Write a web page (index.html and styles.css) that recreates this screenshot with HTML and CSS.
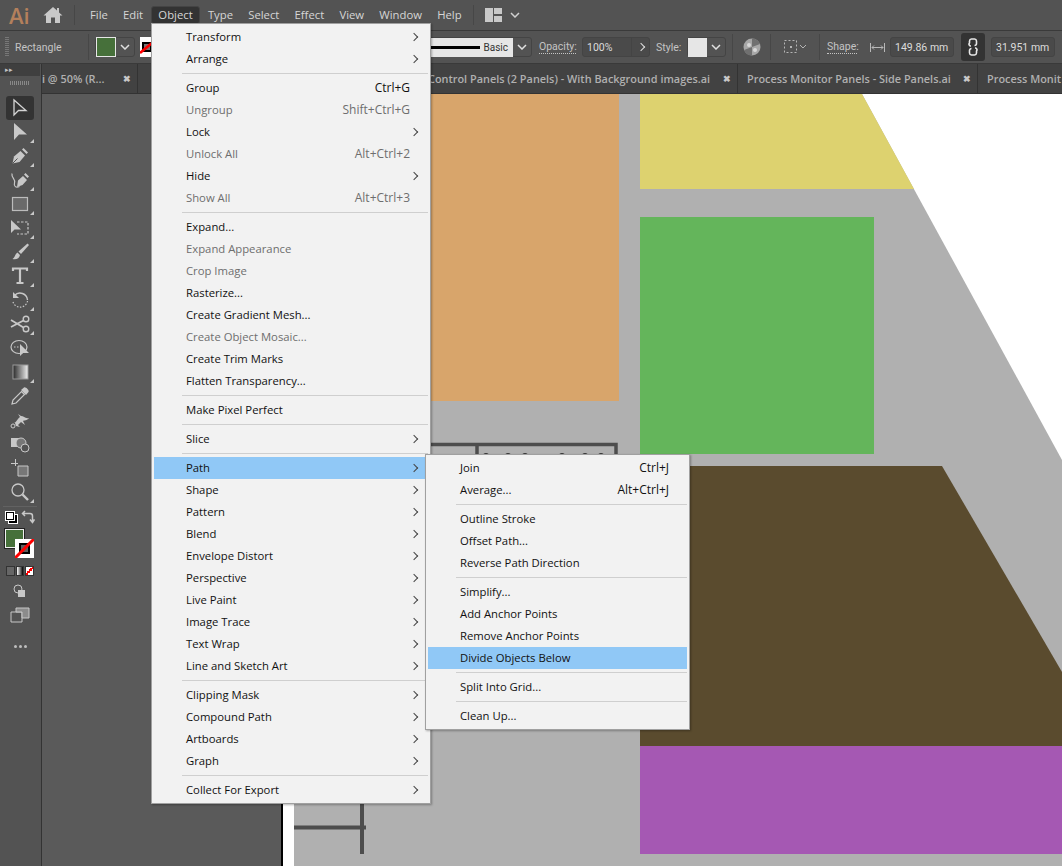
FILE: index.html
```html
<!DOCTYPE html>
<html lang="en">
<head>
  <meta charset="UTF-8">
  <title>Illustrator - Object menu</title>
  <link rel="stylesheet" href="styles.css">
</head>
<body>
<div class="app">

  <div class="menubar">
    <span class="logo">Ai</span>
    <svg class="home" width="20" height="18" viewBox="0 0 20 18"><path d="M10 1 0.5 9.5H3V17H8V11.5H12V17H17V9.5H19.5L16 6.4V2H14V4.6Z" fill="#c9c9c9"/></svg>
    <span class="vsep"></span>
    <nav class="menus">
      <span>File</span><span>Edit</span><span class="active">Object</span><span>Type</span><span>Select</span><span>Effect</span><span>View</span><span>Window</span><span>Help</span>
    </nav>
    <span class="vsep"></span>
    <svg class="layout-icon" width="18" height="14" viewBox="0 0 18 14"><path d="M0 0H8V14H0ZM9 0H17V6H9ZM9 8H17V14H9Z" fill="#c9c9c9"/></svg>
    <svg class="small-chev" width="10" height="6" viewBox="0 0 10 6"><path d="M1 1 5 5 9 1" fill="none" stroke="#d0d0d0" stroke-width="1.5"/></svg>
  </div>

  <div class="controlbar">
    <div class="ctl-left">
      <span class="grip"></span>
      <span class="ctl-label first">Rectangle</span>
      <span class="vsep short"></span>
      <span class="combo">
        <span class="swatch green"></span>
        <svg class="small-chev" width="10" height="6" viewBox="0 0 10 6"><path d="M1 1 5 5 9 1" fill="none" stroke="#e0e0e0" stroke-width="1.5"/></svg>
      </span>
      <svg class="nofill" width="14" height="20" viewBox="0 0 14 20"><rect width="14" height="20" fill="#fff"/><rect x="3" y="6" width="8" height="8" fill="#777" stroke="#000" stroke-width="2"/><path d="M0 16 12 6" stroke="#f00" stroke-width="2.500"/></svg>
    </div>
    <div class="ctl-right">
      <span class="combo">
        <span class="brush"><span class="brush-line"></span>Basic</span>
        <svg class="small-chev" width="10" height="6" viewBox="0 0 10 6"><path d="M1 1 5 5 9 1" fill="none" stroke="#e0e0e0" stroke-width="1.5"/></svg>
      </span>
      <span class="ctl-label dotted opacity-label">Opacity:</span>
      <span class="field opacity"><span class="field-text">100%</span><span class="field-arrow"><i class="chev"></i></span></span>
      <span class="ctl-label style-label">Style:</span>
      <span class="combo">
        <span class="swatch style"></span>
        <svg class="small-chev" width="10" height="6" viewBox="0 0 10 6"><path d="M1 1 5 5 9 1" fill="none" stroke="#e0e0e0" stroke-width="1.5"/></svg>
      </span>
      <span class="vsep short"></span>
      <svg class="globe" width="18" height="18" viewBox="0 0 18 18"><circle cx="9" cy="9" r="8.5" fill="#a8a8a8"/><path d="M9 9 9 .5A8.5 8.5 0 0 1 17 6ZM9 9 1 12A8.5 8.5 0 0 0 9 17.500Z" fill="#707070"/><circle cx="6" cy="7" r="2" fill="#d8d8d8"/><circle cx="12" cy="12" r="2" fill="#d8d8d8"/></svg>
      <span class="vsep short"></span>
      <svg class="align" width="24" height="16" viewBox="0 0 24 16"><path d="M1.500 1.500H13.500V13.500H1.500Z" fill="none" stroke="#b5b5b5" stroke-dasharray="2 2"/><path d="M7 7h2v2H7z" fill="#b5b5b5"/><path d="M17 6l3 3 3-3" fill="none" stroke="#b5b5b5"/></svg>
      <span class="vsep short"></span>
      <span class="ctl-label dotted shape-label">Shape:</span>
      <svg class="width-icon" width="15" height="9" viewBox="0 0 15 9"><path d="M.5 0V9M14.500 0V9M2 4.500H13M4 2.500 2 4.500 4 6.500M11 2.500 13 4.500 11 6.500" fill="none" stroke="#b8b8b8"/></svg>
      <span class="field size">149.86 mm</span>
      <span class="link-btn"><svg width="10" height="18" viewBox="0 0 10 18"><path d="M3 8H2.500A1.800 1.800 0 0 1 1.500 5V3A2.200 2.200 0 0 1 3.500 1H6.500A2.200 2.200 0 0 1 8.500 3V5.500A2 2 0 0 1 6.500 7.500M7 10H7.500A1.800 1.800 0 0 1 8.500 13V15A2.200 2.200 0 0 1 6.500 17H3.500A2.200 2.200 0 0 1 1.500 15V12.500A2 2 0 0 1 3.500 10.500" fill="none" stroke="#e8e8e8" stroke-width="1.600"/></svg></span>
      <span class="field size">31.951 mm</span>
    </div>
  </div>

  <div class="workspace">
    <aside class="toolbar">
      <div class="tool-head"><span class="arrows">&#9656;&#9656;</span></div>
      <div class="tool-grip"></div>

      <div class="tool selected"><svg width="20" height="20" viewBox="0 0 20 20"><path d="M4 2V17L8.500 12.500H16Z" fill="none" stroke="#d4d4d4" stroke-width="1.300"/></svg></div>
      <div class="tool more"><svg width="20" height="20" viewBox="0 0 20 20"><path d="M4 1V18L9 12.500H17Z" fill="#c8c8c8"/></svg></div>
      <div class="tool more"><svg width="20" height="20" viewBox="0 0 20 20"><path d="M2.500 17.500 4 10.500 10.500 5 15 9.500 9.500 16Z" fill="#c8c8c8"/><path d="M12 3.500 13.500 2 18 6.500 16.500 8Z" fill="#c8c8c8"/><path d="M2.500 17.500 7.500 12.500" stroke="#535353"/></svg></div>
      <div class="tool more"><svg width="20" height="20" viewBox="0 0 20 20"><path d="M7 17 8 10.500 13 6 17 10 12.500 15ZM14 4.500 15.500 3 19 6.500 17.500 8Z" fill="#c8c8c8"/><path d="M2 3.500C1 8 6 9 4.500 13 3.500 16.500 6 18 9.500 16.500" fill="none" stroke="#c8c8c8" stroke-width="1.200"/></svg></div>
      <div class="tool more"><svg width="20" height="20" viewBox="0 0 20 20"><rect x="2.500" y="3.500" width="15" height="13" fill="#6a6a6a" stroke="#bcbcbc" stroke-width="1.200"/></svg></div>
      <div class="tool more"><svg width="20" height="20" viewBox="0 0 20 20"><path d="M7 4H18V16H7" fill="none" stroke="#c8c8c8" stroke-dasharray="2.500 1.500" stroke-width="1.200"/><path d="M1 2V15L4.500 11.500H11Z" fill="#c8c8c8"/></svg></div>
      <div class="tool more"><svg width="20" height="20" viewBox="0 0 20 20"><path d="M17.500 1.500 19 3 11 12 8.500 9.500Z" fill="#c8c8c8"/><path d="M7.500 10.500 10 13C9.500 16.500 6 18 2.500 17 5 15.500 5 12 7.500 10.500Z" fill="#c8c8c8"/></svg></div>
      <div class="tool more"><svg width="20" height="20" viewBox="0 0 20 20"><path d="M3 5V2.500H17V5M10 2.500V17M6.500 17H13.500" fill="none" stroke="#c8c8c8" stroke-width="2.200"/></svg></div>
      <div class="tool more"><svg width="20" height="20" viewBox="0 0 20 20"><path d="M4.500 5.500A7.500 7.500 0 0 1 17.500 10" fill="none" stroke="#c8c8c8" stroke-width="1.400"/><path d="M17.500 11A7.500 7.500 0 0 1 3 12" fill="none" stroke="#c8c8c8" stroke-width="1.200" stroke-dasharray="1.500 1.500"/><path d="M3 2V8H9" fill="#c8c8c8"/></svg></div>
      <div class="tool more"><svg width="20" height="20" viewBox="0 0 20 20"><circle cx="16" cy="5" r="2.800" fill="none" stroke="#c8c8c8" stroke-width="1.400"/><circle cx="16" cy="15" r="2.800" fill="none" stroke="#c8c8c8" stroke-width="1.400"/><path d="M13.500 6.500 1 13M13.500 13.500 1 6" stroke="#c8c8c8" stroke-width="1.800" fill="none"/></svg></div>
      <div class="tool"><svg width="20" height="20" viewBox="0 0 20 20"><ellipse cx="9" cy="9" rx="8" ry="6.500" fill="none" stroke="#c8c8c8" stroke-width="1.200"/><path d="M4 9h1.500M7 9h1.500" stroke="#c8c8c8"/><path d="M10 6V18L13 15H19Z" fill="#c8c8c8"/></svg></div>
      <div class="tool more grad-tool"><svg width="20" height="20" viewBox="0 0 20 20"><defs><linearGradient id="gr"><stop offset="0" stop-color="#2a2a2a"/><stop offset="1" stop-color="#f0f0f0"/></linearGradient></defs><rect x="3" y="3" width="15" height="14" fill="url(#gr)" stroke="#999"/></svg></div>
      <div class="tool"><svg width="20" height="20" viewBox="0 0 20 20"><path d="M2 18 3 14 11.500 5.500 14.500 8.500 6 17Z" fill="none" stroke="#c8c8c8" stroke-width="1.200"/><path d="M11 4 14 1.500C15.500.5 19.500 4.500 18.500 6L16 9Z" fill="#c8c8c8"/></svg></div>
      <div class="tool"><svg width="20" height="20" viewBox="0 0 20 20"><path d="M2 13C6 14 7 9 10 7L8 4 11 6C14 6 15 9 19 8 17 11 14 10 13 11L15 15 11 12 8 15 10 17 6 16 5 13Z" fill="#c8c8c8"/><circle cx="3" cy="16" r="2" fill="none" stroke="#c8c8c8"/></svg></div>
      <div class="tool"><svg width="20" height="20" viewBox="0 0 20 20"><rect x="1" y="4" width="9" height="9" fill="#c8c8c8"/><circle cx="11" cy="9" r="5" fill="#777" stroke="#c8c8c8"/><circle cx="15" cy="14" r="4" fill="#535353" stroke="#c8c8c8"/></svg></div>
      <div class="tool"><svg width="20" height="20" viewBox="0 0 20 20"><path d="M8 8H18V18H8Z" fill="#777" stroke="#c8c8c8"/><path d="M1 5.500H8M5.500 1V8" stroke="#c8c8c8"/></svg></div>
      <div class="tool more"><svg width="20" height="20" viewBox="0 0 20 20"><circle cx="8" cy="8" r="6" fill="none" stroke="#c8c8c8" stroke-width="1.300"/><path d="M12.500 12.500 18 18" stroke="#c8c8c8" stroke-width="2.400"/></svg></div>

      <div class="tool-sep"></div>

      <div class="color-mini">
        <span class="mini-swatches"><i class="mini-fill"></i><i class="mini-stroke"></i></span>
        <svg width="14" height="14" viewBox="0 0 14 14"><path d="M2 3.500H9C11 3.500 11.500 5 11.500 6V12M9 9.500 11.500 12.500 13.500 9.500M4 1 1.500 3.500 4 6" fill="none" stroke="#c8c8c8" stroke-width="1.500"/></svg>
      </div>
      <div class="fillstroke">
        <span class="big-fill"></span>
        <svg class="big-stroke" width="19" height="19" viewBox="0 0 19 19"><rect width="19" height="19" fill="#fff"/><rect x="5" y="5" width="9" height="9" fill="#5f5f5f" stroke="#000" stroke-width="2"/><path d="M0 19 19 0" stroke="#f00" stroke-width="3"/></svg>
      </div>
      <div class="modes">
        <i class="mode solid"></i><i class="mode gradient"></i><i class="mode none"></i>
      </div>
      <div class="tool small"><svg width="16" height="14" viewBox="0 0 16 14"><circle cx="6" cy="5" r="4" fill="none" stroke="#c8c8c8"/><rect x="6" y="6" width="7" height="7" fill="#c8c8c8"/></svg></div>
      <div class="tool"><svg width="20" height="18" viewBox="0 0 20 18"><path d="M1 6H12V16H1Z" fill="none" stroke="#c8c8c8"/><path d="M6 2H19V12H12V6H6Z" fill="#8c8c8c" stroke="#c8c8c8"/></svg></div>
      <div class="dots"><i></i><i></i><i></i></div>
    </aside>

    <div class="docarea">
      <div class="tabs">
        <div class="tab first"><span class="tab-name">i @ 50% (R...</span><span class="close">&#10006;</span></div>
        <div class="tab second"><span class="tab-name">Control Panels (2 Panels) - With Background  images.ai</span><span class="close">&#10006;</span></div>
        <div class="tab third"><span class="tab-name">Process Monitor Panels - Side Panels.ai</span><span class="close">&#10006;</span></div>
        <div class="tab last"><span class="tab-name">Process Monit</span></div>
      </div>
      <div class="canvas">
        <svg class="art" width="1020" height="772" viewBox="42 94 1020 772">
          <rect x="42" y="94" width="239" height="772" fill="#5a5a5a"/>
          <rect x="281" y="94" width="2" height="772" fill="#000"/>
          <rect x="283" y="94" width="11" height="772" fill="#fff"/>
          <rect x="294" y="94" width="768" height="772" fill="#b0b0b0"/>
          <path d="M862 94H1062V460Z" fill="#fff"/>
          <rect x="400" y="94" width="219" height="307" fill="#d8a56b"/>
          <path d="M640 94H862L914 189H640Z" fill="#ddd26f"/>
          <rect x="640" y="217" width="234" height="237" fill="#64b55b"/>
          <path d="M640 466H942L1062 672V746H640Z" fill="#5a4b2e"/>
          <rect x="640" y="746" width="422" height="108" fill="#a558b3"/>
          <path d="M425 444.500H616V456M477 444.500V456" fill="none" stroke="#4d4d4d" stroke-width="3.500"/>
          <path d="M294 827.500H366M362 804V854" fill="none" stroke="#4d4d4d" stroke-width="4"/>
          <circle cx="486" cy="456" r="3" fill="#333"/><circle cx="508" cy="456" r="3" fill="#333"/><circle cx="525" cy="456" r="3" fill="#333"/><circle cx="562" cy="456" r="3" fill="#333"/><circle cx="585" cy="456" r="3" fill="#333"/><circle cx="601" cy="456" r="3" fill="#333"/>
        </svg>
      </div>
    </div>
  </div>

  <div class="menu object-menu">
    <div class="item sub">Transform</div>
    <div class="item sub">Arrange</div>
    <div class="sep"></div>
    <div class="item">Group<kbd>Ctrl+G</kbd></div>
    <div class="item off">Ungroup<kbd>Shift+Ctrl+G</kbd></div>
    <div class="item sub">Lock</div>
    <div class="item off">Unlock All<kbd>Alt+Ctrl+2</kbd></div>
    <div class="item sub">Hide</div>
    <div class="item off">Show All<kbd>Alt+Ctrl+3</kbd></div>
    <div class="sep"></div>
    <div class="item">Expand...</div>
    <div class="item off">Expand Appearance</div>
    <div class="item off">Crop Image</div>
    <div class="item">Rasterize...</div>
    <div class="item">Create Gradient Mesh...</div>
    <div class="item off">Create Object Mosaic...</div>
    <div class="item">Create Trim Marks</div>
    <div class="item">Flatten Transparency...</div>
    <div class="sep"></div>
    <div class="item">Make Pixel Perfect</div>
    <div class="sep"></div>
    <div class="item sub">Slice</div>
    <div class="sep"></div>
    <div class="item sub hl">Path</div>
    <div class="item sub">Shape</div>
    <div class="item sub">Pattern</div>
    <div class="item sub">Blend</div>
    <div class="item sub">Envelope Distort</div>
    <div class="item sub">Perspective</div>
    <div class="item sub">Live Paint</div>
    <div class="item sub">Image Trace</div>
    <div class="item sub">Text Wrap</div>
    <div class="item sub">Line and Sketch Art</div>
    <div class="sep"></div>
    <div class="item sub">Clipping Mask</div>
    <div class="item sub">Compound Path</div>
    <div class="item sub">Artboards</div>
    <div class="item sub">Graph</div>
    <div class="sep"></div>
    <div class="item sub">Collect For Export</div>
  </div>

  <div class="menu path-menu">
    <div class="item">Join<kbd>Ctrl+J</kbd></div>
    <div class="item">Average...<kbd>Alt+Ctrl+J</kbd></div>
    <div class="sep"></div>
    <div class="item">Outline Stroke</div>
    <div class="item">Offset Path...</div>
    <div class="item">Reverse Path Direction</div>
    <div class="sep"></div>
    <div class="item">Simplify...</div>
    <div class="item">Add Anchor Points</div>
    <div class="item">Remove Anchor Points</div>
    <div class="item hl">Divide Objects Below</div>
    <div class="sep"></div>
    <div class="item">Split Into Grid...</div>
    <div class="sep"></div>
    <div class="item">Clean Up...</div>
  </div>

</div>
</body>
</html>
```

FILE: styles.css
```css
* {
  box-sizing: border-box;
}

html, body {
  margin: 0;
  height: 100%;
  overflow: hidden;
}

body {
  font-family: "Open Sans", "Noto Sans", sans-serif;
  font-size: 11.3px;
  background-color: #535353;
}

.app {
  position: relative;
  width: 1062px;
  height: 866px;
  display: flex;
  flex-direction: column;
  overflow: hidden;
}

/* top menu bar */
.menubar {
  height: 31px;
  display: flex;
  align-items: center;
  background-color: #535353;
  border-bottom: 1px solid #3a3a3a;
  padding-left: 9px;
  color: #d6d6d6;
}

.logo {
  width: 20px;
  font-size: 22px;
  font-weight: 600;
  color: #b4805c;
  margin-right: 14px;
}

.home {
  margin-right: 11px;
}

.vsep {
  width: 1px;
  height: 20px;
  flex: none;
  background-color: #474747;
}

.vsep.short {
  height: 26px;
}

.menus {
  display: flex;
  align-items: center;
  margin-left: 8px;
  margin-right: 3px;
}

.menus span {
  padding: 1px 7px 2px;
  margin-right: 1.200px;
  border-radius: 3px;
}

.menus .active {
  background-color: #333;
  border: 1px solid #444;
  padding: 0 6px 1px;
}

.layout-icon {
  margin-left: 11px;
  margin-right: 7px;
}

/* control bar */
.controlbar {
  height: 33px;
  display: flex;
  justify-content: space-between;
  align-items: center;
  background-color: #535353;
  border-bottom: 1px solid #3a3a3a;
  padding-right: 7px;
  color: #c4c4c4;
  font-family: Roboto, sans-serif;
  font-size: 10.5px;
}

.ctl-left, .ctl-right {
  display: flex;
  align-items: center;
}

.grip {
  width: 4px;
  height: 20px;
  margin-left: 5px;
  background-image: repeating-linear-gradient(#777 0 1px, transparent 1px 2px);
}

.ctl-label {
  flex: none;
  white-space: nowrap;
}

.ctl-label.first {
  width: 44px;
  margin-left: 6px;
  margin-right: 29px;
}

.ctl-left .vsep {
  margin-right: 6px;
}

.combo {
  height: 20px;
  display: flex;
  align-items: center;
  border: 1px solid #444;
  border-radius: 3px;
}

.combo .small-chev {
  margin: 0 4px;
}

.swatch {
  display: block;
  height: 19px;
}

.swatch.green {
  width: 20px;
  height: 20px;
  background-color: #46703a;
  border: 1px solid #e6e6e6;
}

.nofill {
  margin-left: 5px;
}

.swatch.style {
  width: 19px;
  background-color: #e6e6e6;
}

.brush {
  width: 83px;
  height: 19px;
  display: flex;
  align-items: center;
  justify-content: flex-end;
  padding-right: 5px;
  background-color: #e6e6e6;
  color: #333;
  font-size: 10px;
}

.brush-line {
  width: 50px;
  height: 3px;
  background-color: #000;
  margin-right: 4px;
}

.ctl-right > .ctl-label {
  margin-left: 7px;
  margin-right: 6px;
}

.opacity-label {
  width: 37px;
}

.ctl-right > .style-label {
  width: 25px;
  margin-left: 6px;
}

.ctl-right > .shape-label {
  width: 30px;
  margin-right: 13px;
}

.ctl-label.dotted {
  border-bottom: 1px dotted #c4c4c4;
  line-height: 12px;
}

.field {
  height: 20px;
  display: flex;
  align-items: center;
  border: 1px solid #444;
  border-radius: 3px;
  background-color: #4a4a4a;
  color: #dcdcdc;
  font-size: 10.5px;
}

.field.opacity {
  width: 68px;
}

.field-text {
  flex: 1;
  padding-left: 4px;
}

.field-arrow {
  width: 18px;
  height: 18px;
  display: flex;
  align-items: center;
  justify-content: center;
  border-left: 1px solid #444;
}

.chev {
  display: block;
  width: 6px;
  height: 6px;
  border-top: 1.500px solid #e0e0e0;
  border-right: 1.500px solid #e0e0e0;
  transform: rotate(45deg);
}

.ctl-right > .vsep {
  margin-left: 6px;
}

.globe {
  margin: 0 3px 0 10px;
}

.ctl-right > .vsep + .align {
  margin: 0 6px 0 12px;
}

.width-icon {
  margin: 0 5px 0 0;
}

.field.size {
  width: 64px;
  padding-left: 4px;
}

.link-btn {
  width: 24px;
  height: 28px;
  margin: 0 6px 0 7px;
  display: flex;
  align-items: center;
  justify-content: center;
  background-color: #333;
  border-radius: 3px;
}

/* tools + document */
.workspace {
  flex: 1;
  display: flex;
  min-height: 0;
}

.toolbar {
  width: 42px;
  flex: none;
  display: flex;
  flex-direction: column;
  align-items: center;
  padding-right: 1px;
  background-color: #535353;
  border-right: 1px solid #333;
}

.tool-head {
  width: 100%;
  height: 12px;
  background-color: #3f3f3f;
  font-size: 7px;
  line-height: 12px;
  color: #c4c4c4;
  padding-left: 5px;
}

.tool-grip {
  width: 20px;
  height: 4px;
  margin: 5px 0 11px;
  background-image: repeating-linear-gradient(90deg, #888 0 1px, transparent 1px 2px);
}

.tool {
  position: relative;
  width: 28px;
  height: 24px;
  display: flex;
  align-items: center;
  justify-content: center;
  border-radius: 3px;
}

.tool.selected {
  background-color: #333;
}

.tool.more::after {
  content: "";
  position: absolute;
  right: 0;
  bottom: 1px;
  border-style: solid;
  border-width: 0 0 4px 4px;
  border-color: transparent transparent #c8c8c8 transparent;
}

.tool.small {
  height: 20px;
  margin-bottom: 2px;
}

.tool-sep {
  width: 34px;
  height: 1px;
  margin: 2px 0 3px;
  background-color: #626262;
}

.color-mini {
  width: 30px;
  display: flex;
  justify-content: space-between;
  align-items: center;
  margin-bottom: 5px;
}

.mini-swatches {
  position: relative;
  width: 12px;
  height: 12px;
}

.mini-fill, .mini-stroke {
  position: absolute;
  width: 8px;
  height: 8px;
  border: 1px solid #000;
  outline: 1px solid #fff;
  background-color: #fff;
}

.mini-fill {
  left: 1px;
  top: 1px;
  z-index: 1;
}

.mini-stroke {
  right: 0;
  bottom: 0;
  background-color: #000;
}

.fillstroke {
  position: relative;
  width: 30px;
  height: 30px;
  margin-bottom: 7px;
}

.big-fill {
  position: absolute;
  left: 0;
  top: 0;
  width: 19px;
  height: 19px;
  background-color: #46703a;
  border: 1px solid #f0f0f0;
  outline: 1px solid #222;
}

.big-stroke {
  position: absolute;
  left: 10px;
  top: 10px;
}

.modes {
  display: flex;
  width: 28px;
  height: 10px;
  gap: 1px;
  margin-bottom: 5px;
}

.mode {
  flex: 1;
  border: 1px solid #333;
}

.mode.solid {
  background-color: #666;
}

.mode.gradient {
  background-image: linear-gradient(90deg, #fff, #000);
}

.mode.none {
  background-color: #fff;
  background-image: linear-gradient(135deg, transparent 40%, #f00 40% 60%, transparent 60%);
}

.dots {
  display: flex;
  gap: 2px;
  margin-top: 18px;
}

.dots i {
  width: 3px;
  height: 3px;
  border-radius: 50%;
  background-color: #bdbdbd;
}

.docarea {
  flex: 1;
  min-width: 0;
  display: flex;
  flex-direction: column;
}

.tabs {
  height: 30px;
  flex: none;
  display: flex;
  background-color: #424242;
  border-bottom: 1px solid #333;
  color: #b0b0b0;
  font-size: 10.9px;
  font-weight: 600;
  overflow: hidden;
  white-space: nowrap;
}

.tab {
  flex: none;
  display: flex;
  align-items: center;
  justify-content: space-between;
  padding-right: 6px;
  border-right: 1px solid #333;
}

.tab.first {
  width: 96px;
}

.tab.second {
  width: 600px;
  padding-left: 290px;
}

.tab.third {
  width: 240px;
  padding-left: 9px;
}

.tab.last {
  border-right: 0;
  padding-left: 9px;
}

.close {
  font-size: 9px;
  color: #c8c8c8;
}

.canvas {
  flex: 1;
  position: relative;
  min-height: 0;
  background-color: #5a5a5a;
}

.art {
  display: block;
}

/* dropdown menus lie over everything */
.menu {
  position: absolute;
  background-color: #f2f2f2;
  border: 1px solid #a0a0a0;
  padding: 2px;
  color: #111;
  box-shadow: 1px 1px 2px rgba(0, 0, 0, 0.3);
}

.object-menu {
  left: 151px;
  top: 23px;
  width: 280px;
  height: 781px;
}

.path-menu {
  left: 425px;
  top: 454px;
  width: 265px;
  height: 276px;
  z-index: 2;
}

.item {
  position: relative;
  height: 22px;
  line-height: 22px;
  padding-left: 32px;
  white-space: nowrap;
}

.item kbd {
  position: absolute;
  right: 18px;
  top: 0;
  font: inherit;
  font-size: 12px;
}

.item.off {
  color: #6e6e6e;
}

.item.hl {
  background-color: #90c8f6;
}

.item.sub::after {
  content: "";
  position: absolute;
  right: 11px;
  top: 8px;
  width: 5px;
  height: 5px;
  border-top: 1px solid #444;
  border-right: 1px solid #444;
  transform: rotate(45deg);
}

.sep {
  height: 1px;
  margin: 3px 0 3px 28px;
  background-color: #cfcfcf;
}
```
